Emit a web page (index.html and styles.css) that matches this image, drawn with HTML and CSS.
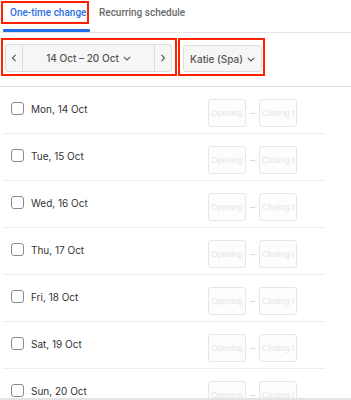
FILE: index.html
```html
<!DOCTYPE html>
<html>
<head>
<meta charset="utf-8">
<link rel="stylesheet" href="styles.css">
</head>
<body>
<div class="page">
  <div class="tabs">
    <div class="tab tab-active">
      <span class="tab-label mark">One-time change</span>
      <span class="tab-bar"></span>
    </div>
    <div class="tab">
      <span class="tab-label">Recurring schedule</span>
    </div>
  </div>

  <div class="toolbar">
    <div class="mark nav-mark">
      <div class="btn-group">
        <button class="btn btn-arrow">
          <svg width="6" height="8" viewBox="0 0 6 8"><path d="M4.5 0.8 L1.5 4 L4.5 7.2" fill="none" stroke="#555" stroke-width="1.1"/></svg>
        </button>
        <button class="btn btn-range">14 Oct – 20 Oct
          <svg class="chev" width="8" height="5" viewBox="0 0 8 5"><path d="M0.8 0.8 L4 4 L7.2 0.8" fill="none" stroke="#555" stroke-width="1.1"/></svg>
        </button>
        <button class="btn btn-arrow">
          <svg width="6" height="8" viewBox="0 0 6 8"><path d="M1.5 0.8 L4.5 4 L1.5 7.2" fill="none" stroke="#555" stroke-width="1.1"/></svg>
        </button>
      </div>
    </div>
    <div class="mark staff-mark">
      <button class="btn btn-staff">Katie (Spa)
        <svg class="chev" width="8" height="5" viewBox="0 0 8 5"><path d="M0.8 0.8 L4 4 L7.2 0.8" fill="none" stroke="#555" stroke-width="1.1"/></svg>
      </button>
    </div>
  </div>

  <div class="days">
    <div class="day"><label class="day-check"><span class="box"></span><span class="day-name">Mon, 14 Oct</span></label><div class="times"><span class="time">Opening</span><span class="dash">–</span><span class="time">Closing t</span></div></div>
    <div class="day"><label class="day-check"><span class="box"></span><span class="day-name">Tue, 15 Oct</span></label><div class="times"><span class="time">Opening</span><span class="dash">–</span><span class="time">Closing t</span></div></div>
    <div class="day"><label class="day-check"><span class="box"></span><span class="day-name">Wed, 16 Oct</span></label><div class="times"><span class="time">Opening</span><span class="dash">–</span><span class="time">Closing t</span></div></div>
    <div class="day"><label class="day-check"><span class="box"></span><span class="day-name">Thu, 17 Oct</span></label><div class="times"><span class="time">Opening</span><span class="dash">–</span><span class="time">Closing t</span></div></div>
    <div class="day"><label class="day-check"><span class="box"></span><span class="day-name">Fri, 18 Oct</span></label><div class="times"><span class="time">Opening</span><span class="dash">–</span><span class="time">Closing t</span></div></div>
    <div class="day"><label class="day-check"><span class="box"></span><span class="day-name">Sat, 19 Oct</span></label><div class="times"><span class="time">Opening</span><span class="dash">–</span><span class="time">Closing t</span></div></div>
    <div class="day"><label class="day-check"><span class="box"></span><span class="day-name">Sun, 20 Oct</span></label><div class="times"><span class="time">Opening</span><span class="dash">–</span><span class="time">Closing t</span></div></div>
  </div>
  <div class="footer-line"></div>
</div>
</body>
</html>
```

FILE: styles.css
```css
* { box-sizing: border-box; }
html, body { margin: 0; padding: 0; background: #fff; }
body {
  font-family: Inter, "Noto Sans", "Liberation Sans", sans-serif;
  font-size: 10px;
  color: #333;
  width: 351px;
  height: 400px;
  overflow: hidden;
}
.page { position: relative; height: 400px; }

.mark { border: 2px solid #ff2200; }

/* tabs */
.tabs {
  display: flex;
  height: 33px;
  border-bottom: 1px solid #e4e4e4;
  padding-left: 1px;
}
.tab { display: flex; flex-direction: column; }
.tab-active { width: 89px; }
.tab-label {
  height: 23px;
  margin-top: 1px;
  display: flex;
  align-items: center;
  padding-left: 7px;
  font-family: Roboto, "Liberation Sans", sans-serif;
  font-size: 10px;
  color: #6a6a6a;
  font-weight: 500;
  white-space: nowrap;
}
.tab-active .tab-label { color: #2b6fe0; width: 88px; }
.tab-bar {
  margin-top: 5px;
  margin-left: 2px;
  height: 3px;
  background: #1f6fe8;
  border-radius: 1px;
}
.tab + .tab .tab-label { padding-left: 9px; }

/* toolbar */
.toolbar {
  display: flex;
  gap: 1px;
  padding: 5px 0 0 1px;
  height: 54px;
  border-bottom: 1px solid #e2e2e2;
}
.nav-mark {
  width: 176px;
  height: 38px;
  padding: 4px 2px 2px 2px;
}
.staff-mark {
  width: 87px;
  height: 38px;
  padding: 5px 1px 2px 3px;
}
.btn {
  font-family: inherit;
  font-size: 10px;
  color: #555;
  background: #f6f6f6;
  border: 1px solid #dcdcdc;
  height: 28px;
  margin: 0;
  padding: 0;
  display: flex;
  align-items: center;
  justify-content: center;
  font-weight: 500;
}
.btn-group { display: flex; }
.btn-arrow { width: 18px; }
.btn-group .btn:first-child { border-radius: 3px 0 0 3px; }
.btn-group .btn:last-child { border-radius: 0 3px 3px 0; width: 18px; }
.btn-range {
  width: 133px;
  margin: 0 -1px;
}
.btn-staff { width: 79px; height: 27px; border-radius: 3px; }
.chev { margin-left: 4px; margin-top: 1px; }

/* days */
.days { padding: 0 26px 0 3px; }
.day {
  display: flex;
  height: 47px;
  padding: 6px 0 0 0;
  border-bottom: 1px solid #eeeeee;
}
.day-check {
  display: flex;
  align-items: center;
  height: 28px;
  padding-left: 8px;
  flex: 1;
  padding-top: 3px;
}
.box {
  width: 13px;
  height: 13px;
  border: 1px solid #8a8a8a;
  border-radius: 3px;
  background: #fff;
}
.day-name {
  margin-left: 7px;
  font-size: 10px;
  color: #333;
}
.times { display: flex; align-items: center; margin-right: 28px; }
.time {
  width: 38px;
  height: 28px;
  border: 1px solid #e6e6e6;
  border-radius: 3px;
  background: #fdfdfd;
  color: #e6e6e6;
  font-family: "Liberation Sans", sans-serif;
  font-size: 8.5px;
  display: flex;
  align-items: center;
  overflow: hidden;
  white-space: nowrap;
  padding-left: 2px;
  letter-spacing: -0.1px;
}
.dash { width: 13px; text-align: center; color: #cfcfcf; }

.footer-line {
  position: absolute;
  left: 0;
  right: 0;
  top: 398px;
  height: 2px;
  background: #e4e4e4;
}
```
